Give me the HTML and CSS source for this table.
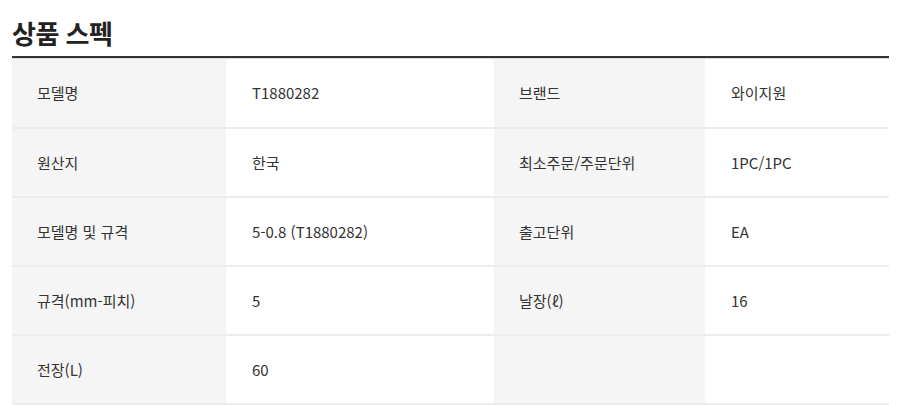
FILE: index.html
```html
<!DOCTYPE html>
<html lang="ko">
<head>
<meta charset="utf-8">
<link rel="stylesheet" href="styles.css">
</head>
<body>
<section class="spec">
  <h2 class="spec-title">상품 스펙</h2>
  <table class="spec-table">
    <tr>
      <th>모델명</th><td>T1880282</td>
      <th>브랜드</th><td>와이지원</td>
    </tr>
    <tr>
      <th>원산지</th><td>한국</td>
      <th>최소주문/주문단위</th><td>1PC/1PC</td>
    </tr>
    <tr>
      <th>모델명 및 규격</th><td>5-0.8 (T1880282)</td>
      <th>출고단위</th><td>EA</td>
    </tr>
    <tr>
      <th>규격(mm-피치)</th><td>5</td>
      <th>날장(ℓ)</th><td>16</td>
    </tr>
    <tr>
      <th>전장(L)</th><td>60</td>
      <th></th><td></td>
    </tr>
  </table>
</section>
</body>
</html>
```

FILE: styles.css
```css
html, body {
  margin: 0;
  padding: 0;
  background: #fff;
}
body {
  font-family: "Noto Sans CJK KR", "Noto Sans", sans-serif;
  color: #333;
}
.spec {
  padding: 0 17px 0 12px;
}
.spec-title {
  margin: 0;
  padding-top: 18px;
  height: 58px;
  box-sizing: border-box;
  border-bottom: 2px solid #333;
  font-size: 26px;
  line-height: 30px;
  font-weight: 700;
  color: #222;
  letter-spacing: -0.5px;
}
.spec-table {
  width: 100%;
  border-collapse: collapse;
  border-top: 1px solid #dcdcdc;
  table-layout: fixed;
}
.spec-table tr {
  height: 69px;
  border-bottom: 2px solid #ececec;
}
.spec-table th,
.spec-table td {
  box-sizing: border-box;
  padding: 0 0 0 25px;
  font-size: 15px;
  font-weight: 400;
  text-align: left;
  vertical-align: middle;
  color: #333;
}
.spec-table th {
  background: #f5f5f5;
}
.spec-table th:nth-child(1) { width: 214px; }
.spec-table td:nth-child(2) { width: 268px; }
.spec-table th:nth-child(3) { width: 211px; }
.spec-table td:nth-child(2),
.spec-table td:nth-child(4) {
  padding-left: 26px;
}
```
